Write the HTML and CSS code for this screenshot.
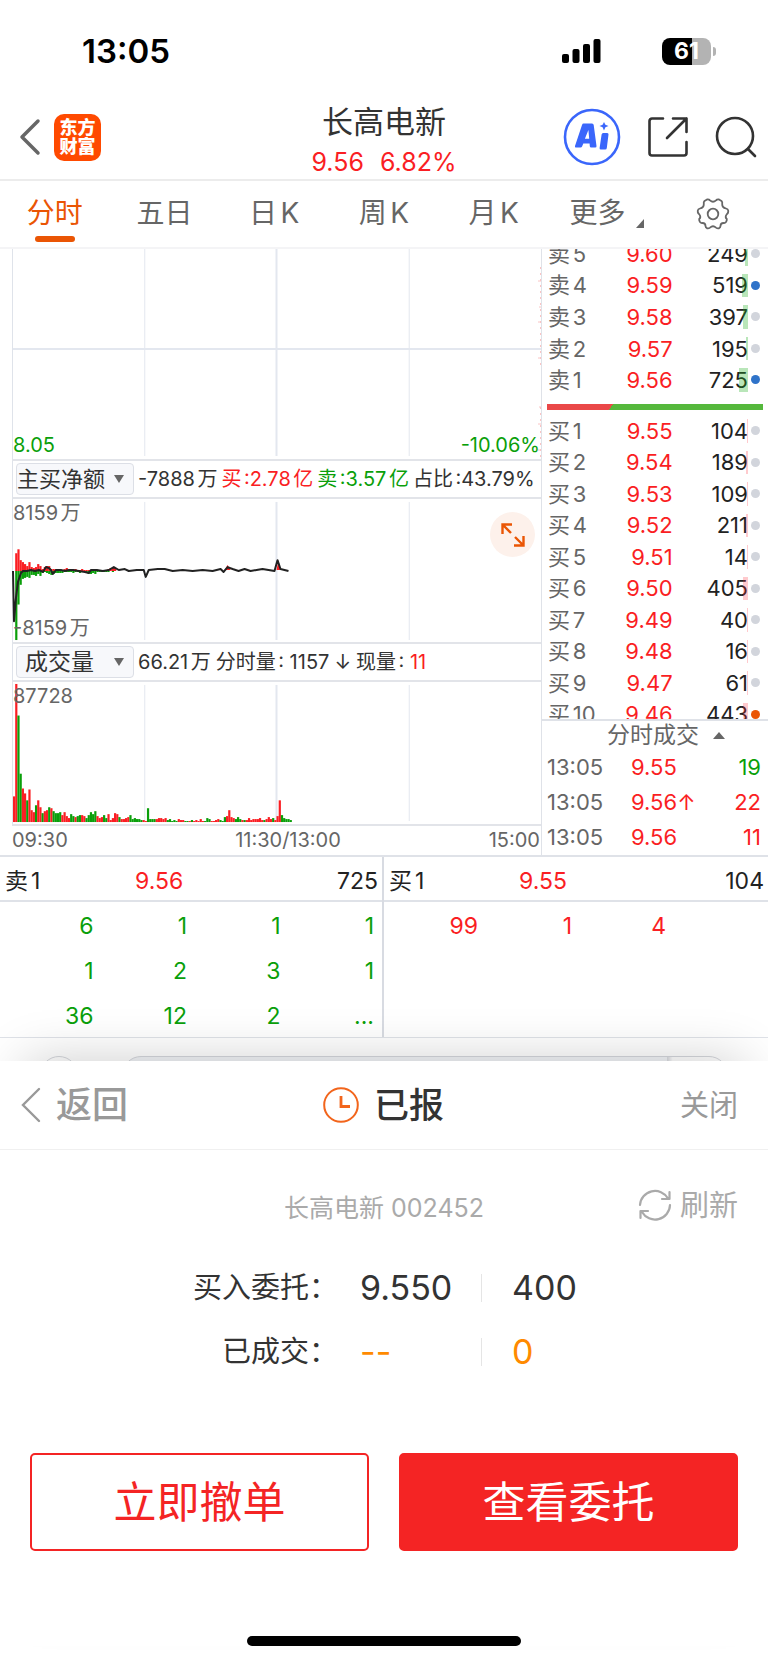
FILE: index.html
```
<!DOCTYPE html>
<html lang="zh-CN">
<head>
<meta charset="utf-8">
<meta name="viewport" content="width=device-width, initial-scale=1">
<title>长高电新</title>
<link rel="stylesheet" href="styles.css">
</head>
<body>
<div class="status">
  <span class="status-time">13:05</span>
  <div class="status-icons">
    <svg width="39" height="26" viewBox="0 0 39 26" aria-hidden="true"><rect x="0" y="16" width="7" height="9" rx="2"/><rect x="10.500" y="11" width="7" height="14" rx="2"/><rect x="21" y="6" width="7" height="19" rx="2"/><rect x="31.500" y="1" width="7" height="24" rx="2"/></svg>
    <div class="battery"><span>61</span></div>
  </div>
</div>

<header class="nav">
  <div class="nav-left">
    <button class="icon-btn" aria-label="返回"><svg width="22" height="38" viewBox="0 0 22 38"><path d="M19 3 3 19l16 16" fill="none" stroke="#666" stroke-width="3.500" stroke-linecap="round" stroke-linejoin="round"/></svg></button>
    <a class="logo" href="#">东方<br>财富</a>
  </div>
  <div class="nav-title">
    <h1>长高电新</h1>
    <p><span>9.56</span><span>6.82%</span></p>
  </div>
  <div class="nav-right">
    <button class="icon-btn" aria-label="AI"><svg width="58" height="58" viewBox="0 0 58 58"><circle cx="29" cy="29" r="27" fill="none" stroke="#3a66fb" stroke-width="2.600"/><path fill="#3a66fb" fill-rule="evenodd" d="M20.500 15.500H29q1.500 0 1.700 1.500l2.800 21q.2 1.500-1.300 1.500h-4q-1.300 0-1.400-1.300l-.2-2.700h-6.300l-1.100 2.700q-.5 1.300-1.800 1.300h-4.300q-1.800 0-1.100-1.600l7-21q.5-1.400 1.500-1.400zM25.400 22l-3.500 8.800h4.300zM40.200 25h4q1.500 0 1.300 1.500L43.800 40q-.2 1.500-1.600 1.500h-4.300q-1.500 0-1.300-1.500l2-13.500q.2-1.500 1.600-1.500zM41 14l1.400 2.800L45.500 18l-3.100 1.300L41 22.500l-1.400-3.200L36.500 18l3.100-1.200z"/></svg></button>
    <button class="icon-btn" aria-label="分享"><svg width="42" height="42" viewBox="0 0 42 42" fill="none" stroke="#333" stroke-width="2.600" stroke-linecap="round" stroke-linejoin="round"><path d="M16 2.500H5A2.500 2.500 0 0 0 2.500 5v32A2.500 2.500 0 0 0 5 39.500h32a2.500 2.500 0 0 0 2.500-2.500V26M26 2.500h13.500V16M39.500 2.500 20 22"/></svg></button>
    <button class="icon-btn" aria-label="搜索"><svg width="42" height="42" viewBox="0 0 42 42" fill="none" stroke="#333" stroke-width="2.600" stroke-linecap="round"><circle cx="20" cy="20" r="18"/><path d="m33 33 7 7"/></svg></button>
  </div>
</header>

<nav class="tabs">
  <a class="tab active" href="#">分时</a>
  <a class="tab" href="#">五日</a>
  <a class="tab" href="#">日K</a>
  <a class="tab" href="#">周K</a>
  <a class="tab" href="#">月K</a>
  <a class="tab more" href="#">更多<i></i></a>
  <button class="tab icon-btn" aria-label="设置"><svg width="34" height="34" viewBox="-17 -17 34 34" fill="none" stroke="#666" stroke-width="1.800" stroke-linejoin="round"><path d="M-6-14.500Q-4-14.800-3-13.600Q0-11 3-13.600Q4-14.800 6-14.500L8.500-13Q9.600-12 9.200-10Q9-6.500 13-5.500Q15-5 15.200-3.500V-2Q15-.8 14-0Q11.500 3 13.800 5Q14 6.500 13 8Q12 9.300 10.500 9Q7.500 9 7.500 12Q7.500 13.500 6 14.300Q4.500 14.800 3 13.600Q0 11-3 13.600Q-4.500 14.800-6 14.300Q-7.500 13.500-7.500 12Q-7.500 9-10.500 9Q-12 9.300-13 8Q-14 6.500-13.800 5Q-11.500 3-14 0Q-15-.8-15.200-2V-3.500Q-15-5-13-5.500Q-9-6.500-9.200-10Q-9.600-12-8.500-13Z"/><circle r="5.300"/></svg></button>
</nav>

<main class="quote">
  <section class="charts">
    <div class="plot plot-price">
      <svg class="grid" viewBox="0 0 529 212" preserveAspectRatio="none"><path class="thin" d="M132 0V209M397 0V209"/><path class="thick" d="M264 0V209M0 101H529"/></svg>
      <svg class="ticks" width="3" height="200" viewBox="0 0 3 200"><path d="M2.500 10V110M2.500 150V200" stroke-dasharray="2 4"/><path d="M0 24h3M1 50h2M0 65h3M0 101h3M1 150h2M0 167h3M0 193h3"/></svg>
      <span class="low">8.05</span><span class="low">-10.06%</span>
    </div>
    <div class="info">
      <button class="picker picker-tight">主买净额<i></i></button>
      <p><span>-7888万</span><span class="red">买:2.78亿</span><span class="green">卖:3.57亿</span><span>占比:43.79%</span></p>
    </div>
    <div class="plot plot-net">
      <svg class="grid" viewBox="0 0 529 145" preserveAspectRatio="none"><path class="thin" d="M132 3V143M397 3V143"/><path class="thick" d="M264 3V143"/><g id="net"></g></svg>
      <span class="scale">8159万</span><span class="scale">-8159万</span>
      <button class="expand" aria-label="全屏"><svg width="24" height="24" viewBox="0 0 24 24" fill="none" stroke="#ea5504" stroke-width="2.400"><path d="M1.500 11V1.500H11M2 2l8 8M22.500 13v9.500H13M22 22l-8-8"/></svg></button>
    </div>
    <div class="info info-volume">
      <button class="picker">成交量<i></i></button>
      <p><span>66.21万</span><span>分时量: 1157</span><span>↓</span><span>现量: <b class="red">11</b></span></p>
    </div>
    <div class="plot plot-volume">
      <svg class="grid" viewBox="0 0 529 144" preserveAspectRatio="none"><path class="thin" d="M132 3V141M397 3V141"/><path class="thick" d="M264 3V141"/><g id="volume"></g></svg>
      <span class="scale">87728</span>
    </div>
    <div class="times"><span>09:30</span><span>11:30/13:00</span><span>15:00</span></div>
  </section>

  <aside class="book">
    <div class="levels">
      <ul class="side asks">
        <li><span>卖5</span><b>9.60</b><em>249</em><i class="bar w3"></i><i class="dot"></i></li>
        <li><span>卖4</span><b>9.59</b><em>519</em><i class="bar w6"></i><i class="dot blue"></i></li>
        <li><span>卖3</span><b>9.58</b><em>397</em><i class="bar w5"></i><i class="dot"></i></li>
        <li><span>卖2</span><b>9.57</b><em>195</em><i class="bar w2"></i><i class="dot"></i></li>
        <li><span>卖1</span><b>9.56</b><em>725</em><i class="bar w9"></i><i class="dot blue"></i></li>
      </ul>
      <div class="ratio"></div>
      <ul class="side bids">
        <li><span>买1</span><b>9.55</b><em>104</em><i class="bar w1"></i><i class="dot"></i></li>
        <li><span>买2</span><b>9.54</b><em>189</em><i class="bar w2"></i><i class="dot"></i></li>
        <li><span>买3</span><b>9.53</b><em>109</em><i class="bar w1"></i><i class="dot"></i></li>
        <li><span>买4</span><b>9.52</b><em>211</em><i class="bar w2"></i><i class="dot"></i></li>
        <li><span>买5</span><b>9.51</b><em>14</em><i class="bar"></i><i class="dot"></i></li>
        <li><span>买6</span><b>9.50</b><em>405</em><i class="bar w5"></i><i class="dot"></i></li>
        <li><span>买7</span><b>9.49</b><em>40</em><i class="bar w1"></i><i class="dot"></i></li>
        <li><span>买8</span><b>9.48</b><em>16</em><i class="bar"></i><i class="dot"></i></li>
        <li><span>买9</span><b>9.47</b><em>61</em><i class="bar w1"></i><i class="dot"></i></li>
        <li><span>买10</span><b>9.46</b><em>443</em><i class="bar w5"></i><i class="dot orange"></i></li>
      </ul>
    </div>
    <div class="deals">
      <button class="deals-head">分时成交<i></i></button>
      <ul>
        <li><span>13:05</span><b>9.55</b><em class="green">19</em></li>
        <li><span>13:05</span><b>9.56↑</b><em class="red">22</em></li>
        <li><span>13:05</span><b>9.56</b><em class="red">11</em></li>
      </ul>
    </div>
  </aside>
</main>

<section class="queues">
  <div class="queue">
    <div class="queue-head"><span>卖1</span><b>9.56</b><em>725</em></div>
    <div class="orders green"><span>6</span><span>1</span><span>1</span><span>1</span><span>1</span><span>2</span><span>3</span><span>1</span><span>36</span><span>12</span><span>2</span><span>...</span></div>
  </div>
  <div class="queue">
    <div class="queue-head"><span>买1</span><b>9.55</b><em>104</em></div>
    <div class="orders red"><span>99</span><span>1</span><span>4</span></div>
  </div>
</section>
<div class="under"><i class="under-round"></i><i class="under-pill"></i></div>

<section class="sheet">
  <header class="sheet-head">
    <button class="back"><svg width="22" height="38" viewBox="0 0 22 38"><path d="M19 3 3 19l16 16" fill="none" stroke="#999" stroke-width="2.400" stroke-linecap="round"/></svg>返回</button>
    <h2><svg width="36" height="36" viewBox="0 0 36 36" fill="none" stroke="#f2651c"><circle cx="18" cy="18" r="16.800" stroke-width="2"/><path d="M18 9v10.500h9" stroke-width="2.800"/></svg>已报</h2>
    <button class="close">关闭</button>
  </header>
  <div class="stock">
    <p>长高电新 002452</p>
    <button class="refresh"><svg width="34" height="34" viewBox="0 0 34 34" fill="none" stroke="#aaa" stroke-width="2.200" stroke-linecap="round" stroke-linejoin="round"><path d="M2 17A15 15 0 0 1 30 10.500M32 17A15 15 0 0 1 4 24M31.500 4v7H24M2.500 30v-7H10"/></svg>刷新</button>
  </div>
  <dl class="order">
    <dt>买入委托：</dt><dd>9.550</dd><dd>400</dd>
    <dt>已成交：</dt><dd class="orange-text">--</dd><dd class="orange-text">0</dd>
  </dl>
  <div class="actions">
    <button class="btn">立即撤单</button>
    <button class="btn btn-fill">查看委托</button>
  </div>
  <div class="home"></div>
</section>
<script src="charts.js"></script>
</body>
</html>
```
FILE: styles.css
```
* { box-sizing: border-box; }
body {
  margin: 0;
  background: #fff;
  color: #333;
  font-family: Inter, "Noto Sans CJK SC", sans-serif;
  font-size: 23px;
  line-height: 1;
  text-autospace: normal;
}
h1, h2, p, ul, dl, dd { margin: 0; padding: 0; font-weight: 400; }
ul { list-style: none; }
b, em, i { font-weight: 400; font-style: normal; }
a { color: inherit; text-decoration: none; }
button { border: 0; padding: 0; background: none; color: inherit; font: inherit; }
svg { display: block; }
.icon-btn { display: flex; align-items: center; justify-content: center; }
.red { color: #fa1e23; }
.green { color: #0a9f0a; }

/* status bar */
.status { display: flex; justify-content: space-between; align-items: center; height: 102px; padding: 0 57px 0 82px; }
.status-time { font-size: 33px; font-weight: 600; color: #000; }
.status-icons { display: flex; align-items: center; gap: 61px; }
.battery {
  position: relative;
  width: 49px; height: 27px;
  border-radius: 8px;
  background: linear-gradient(90deg, #000 62%, #b3b3b3 62%);
  color: #fff; font-size: 23px; font-weight: 700; line-height: 27px; text-align: center;
}
.battery::after { content: ""; position: absolute; left: 51px; top: 9px; width: 3px; height: 9px; border-radius: 0 4px 4px 0; background: #b3b3b3; }

/* title bar */
.nav { display: grid; grid-template-columns: 1fr auto 1fr; align-items: center; height: 79px; padding: 0 11px 12px; border-bottom: 2px solid #ececec; }
.nav-left { display: flex; align-items: center; gap: 13px; padding: 0 0 10px 8px; }
.logo { width: 47px; height: 47px; padding-top: 4px; border-radius: 10px; background: #ff4a00; color: #fff; font-size: 18px; font-weight: 900; line-height: 19px; text-align: center; }
.nav-title { text-align: center; }
.nav-title h1 { font-size: 31px; line-height: 40px; }
.nav-title p { display: flex; justify-content: center; gap: 16px; font-size: 25px; line-height: 40px; color: #fa1e23; }
.nav-right { display: flex; align-items: center; justify-content: flex-end; gap: 26px; padding-bottom: 10px; }

/* period tabs */
.tabs { display: grid; grid-template-columns: repeat(7, 1fr); height: 68px; border-bottom: 2px solid #f4f4f6; color: #666; font-size: 28px; line-height: 64px; text-align: center; }
.tab { position: relative; }
.tab.active { color: #ea5504; }
.tab.active::after { content: ""; position: absolute; left: 50%; bottom: 5px; width: 40px; height: 6px; margin-left: -20px; border-radius: 3px; background: #ea5504; }
.more { padding-right: 12px; }
.more i { position: absolute; right: 14px; bottom: 19px; border-left: 8px solid transparent; border-bottom: 9px solid #666; }

/* charts */
.quote { display: grid; grid-template-columns: 541fr 227fr; border-bottom: 2px solid #dfe2e8; }
.charts { padding-left: 12px; min-width: 0; }
.plot { position: relative; border-left: 1px solid #dfe3ea; border-bottom: 2px solid #e2e4e9; }
.grid { width: 100%; height: 100%; overflow: visible; }
.thin { stroke: #e3e7ef; fill: none; }
.thick { stroke: #e3e7ef; stroke-width: 2; fill: none; }
.ticks { position: absolute; right: 0; top: 8px; fill: none; stroke: #fac4c4; }
.plot-price { height: 212px; }
.low { position: absolute; left: 0; bottom: 4px; font-size: 20px; line-height: 20px; color: #0a9f0a; }
.low + .low { left: auto; right: 1px; }
.info { display: flex; align-items: center; gap: 4px; height: 38px; padding-left: 3px; border-bottom: 2px solid #e2e4e9; border-left: 1px solid #dfe3ea; }
.info p { display: flex; gap: 4px; font-size: 20px; white-space: nowrap; }
.picker { display: flex; flex: none; align-items: center; justify-content: space-between; width: 118px; height: 32px; padding: 0 9px 0 8px; border: 1px solid #dcdfe6; border-radius: 4px; background: #f7f8fb; font-size: 23px; line-height: 28px; }
.picker-tight { padding-left: 0; font-size: 22px; }
.picker i { border: 5px solid transparent; border-top: 8px solid #666; border-bottom: 0; }
.plot-net { height: 145px; }
.scale { position: absolute; left: 0; top: 4px; color: #666; font-size: 20px; line-height: 20px; }
.scale + .scale { top: auto; bottom: 4px; }
.expand { position: absolute; right: 6px; top: 13px; display: flex; align-items: center; justify-content: center; width: 45px; height: 45px; border-radius: 50%; background: #fdf1eb; }
.info-volume p { gap: 5px; }
.plot-volume { height: 144px; }
.times { display: flex; justify-content: space-between; padding-right: 1px; color: #666; font-size: 20px; line-height: 29px; }
.times span:first-child { width: 114px; }
.times span:last-child { width: 90px; text-align: right; }

/* order book */
.book { display: flex; flex-direction: column; border-left: 1px solid #dfe2e8; }
.levels { height: 472px; overflow: hidden; border-bottom: 2px solid #dfe2e8; }
.side { display: grid; grid-auto-rows: 1fr; }
.side li { position: relative; display: grid; grid-template-columns: 56px 71fr 78fr; align-items: center; padding: 0 20px 0 6px; font-size: 22px; }
.side span, .deals span { color: #666; white-space: nowrap; }
.side b { color: #fa1e23; text-align: right; }
.side em { text-align: right; color: #222; }
.asks { height: 158px; margin-top: -11px; }
.bids { height: 315px; }
.bar { position: absolute; right: 20px; top: 4px; bottom: 4px; width: 1px; background: #ff2d3740; }
.asks .bar { background: #20b02050; }
.w2 { width: 2px; }
.w3 { width: 3px; }
.w5 { width: 5px; }
.w6 { width: 6px; }
.w9 { width: 9px; }
.dot { position: absolute; right: 8px; top: 11px; width: 9px; height: 9px; border-radius: 50%; background: #d2d5dc; }
.blue { background: #2f73c9; }
.orange { background: #ea5504; }
.ratio { height: 6px; margin: 8px 5px 5px; background: linear-gradient(125deg, #ea4848 30%, #55b83c 30%); }
.deals-head { display: flex; align-items: center; justify-content: center; gap: 14px; width: 100%; height: 29px; padding-left: 22px; color: #666; font-size: 23px; }
.deals-head i { border: 6px solid transparent; border-bottom: 7px solid #666; border-top: 0; }
.deals li { display: grid; grid-template-columns: 84px 1fr auto; padding: 0 7px 0 5px; font-size: 22px; line-height: 35px; }
.deals b { color: #fa1e23; }

/* queue detail */
.queues { display: grid; grid-template-columns: 382fr 386fr; border-bottom: 1px solid #dfe2e8; }
.queue + .queue { border-left: 2px solid #d8dbe2; }
.queue-head { display: grid; grid-template-columns: 130px 1fr auto; align-items: center; height: 45px; padding: 5px 4px 0 5px; border-bottom: 2px solid #dfe2e8; color: #222; }
.queue-head b { color: #fa1e23; }
.orders { display: grid; grid-template-columns: repeat(4, 1fr); align-content: start; height: 135px; padding: 2px 8px 0 0; line-height: 45px; text-align: right; }
.under { display: flex; gap: 44px; height: 23px; padding: 18px 40px 0; overflow: hidden; background: #fff; }
.under-round { width: 38px; height: 38px; flex: none; border: 1px solid #d6d8dd; border-radius: 50%; }
.under-pill { flex: 1; height: 38px; border: 1px solid #d6d8dd; border-radius: 20px; background: linear-gradient(90deg, #f2f4f8 90%, #d6d8dd 90%, #fff 91%); }

/* order sheet */
.sheet { position: relative; background: #fff; box-shadow: 0 -24px 50px -24px rgba(0, 0, 0, .2); }
.sheet-head { display: grid; grid-template-columns: 1fr auto 1fr; align-items: center; height: 89px; padding: 0 30px 0 20px; border-bottom: 1px solid #f0f0f0; color: #999; font-size: 29px; }
.back { display: flex; align-items: center; gap: 14px; justify-self: start; font-size: 36px; font-weight: 500; }
.sheet-head h2 { display: flex; align-items: center; gap: 15px; padding-left: 9px; color: #333; font-size: 35px; font-weight: 500; }
.close { justify-self: end; }
.stock { display: grid; grid-template-columns: 1fr auto 1fr; align-items: center; height: 116px; padding: 0 30px; color: #aaa; font-size: 29px; }
.stock p { grid-column: 2; font-size: 25px; line-height: 36px; }
.refresh { display: flex; align-items: center; justify-self: end; gap: 8px; padding-bottom: 6px; }
.order { display: grid; grid-template-columns: 338fr 143fr 287fr; row-gap: 20px; font-size: 29px; line-height: 44px; }
.order dt { text-align: right; }
.order dd { padding-left: 22px; font-size: 34px; }
.order dd + dd { padding-left: 31px; background: linear-gradient(#e5e5e5, #e5e5e5) 0 50% / 1px 28px no-repeat; }
.order .orange-text { color: #ff8a00; }
.actions { display: grid; grid-template-columns: 1fr 1fr; gap: 30px; padding: 79px 30px 85px; }
.btn { height: 98px; border: 2px solid #f42424; border-radius: 5px; background: #fff; color: #f42424; font-size: 43px; }
.btn-fill { background: #f42424; color: #fff; }
.home { width: 274px; height: 10px; margin: 0 auto 17px; border-radius: 5px; background: #000; }
```
FILE: charts.js
```
const RED = '#fa1e23', GREEN = '#0a9f0a', STEP = 2.2;

// One entry per minute: "r" or "g" for the colour, then the bar height.
const volume = ('r26 r140 g108 g49 r34 r29 g22 r33 r12 r10 g17 r22 r15 g9 r11 r12 g15 r14 g11 g9 g9 g10 r7 r10 r6 r4 g8 g6 r5 g6 ' +
  'g7 r7 r6 g4 g7 g10 g8 g11 r6 r4 r5 g7 g4 r8 r2 r4 r9 r8 g5 r3 r3 r4 r5 g7 g3 g4 g3 g3 g2 r2 ' +
  'r1 g14 g3 g3 g3 r3 r4 r4 r3 r4 g2 g3 g1 g2 g1 r3 r2 r2 g1 g1 r1 g2 r1 r2 r1 r3 r1 g1 g4 g3 ' +
  'r1 r1 r2 r3 g2 g1 g5 r6 r12 r5 r4 g3 g5 g3 r2 g2 r2 r4 r2 r3 r3 r3 r4 r2 g2 r3 r5 r3 g4 r2 ' +
  'r6 r22 g7 g4 g3 g3 g2').split(' ');

// One entry per minute: [inflow height, outflow height].
const flow = [[0, 0], [18, 70], [22, 34], [11, 14], [9, 8], [7, 7], [5, 6], [9, 7], [4, 4], [3, 4], [4, 5], [7, 3], [5, 5], [2, 2],
  [4, 1], [5, 2], [5, 3], [2, 4], [2, 3], [2, 2], [1, 2], [2, 2], [1, 2], [2, 1], [3, 1], [1, 1], [2, 1], [2, 2], [2, 1], [1, 1],
  [1, 2], [2, 1], [1, 1], [1, 2], [1, 3], [1, 3], [1, 2], [1, 3], [1, 1], [1, 1], [1, 1], [1, 1], [1, 1], [2, 1], [3, 0], [3, 1], [3, 0]];

const trend = '0,73 1,124 3,100 5,84 8,75 10,73 14,73 18,72 22,73 26,72 30,74 33,69 36,70 38,72 40,76 43,72 48,72 52,73 56,72 60,72 66,73 72,74 ' +
  '76,75 78,72 84,72 90,73 96,72 101,69 106,72 112,71 116,73 124,72 131,72 133,79 136,72 145,71 152,71 160,73 170,72 180,73 190,72 200,73 208,71 ' +
  '211,74 215,69 220,71 226,73 232,71 238,73 244,72 250,71 256,72 262,73 265,62 268,71 272,72 276,73';

function bar(x, top, height, color) {
  return `<rect x="${x.toFixed(1)}" y="${top}" width="2.200" height="${height}" fill="${color}"/>`;
}

document.getElementById('volume').innerHTML = volume
  .map((v, i) => bar(i * STEP, 142 - v.slice(1), +v.slice(1), v[0] === 'r' ? RED : GREEN)).join('');

document.getElementById('net').innerHTML = flow
  .map(([up, down], i) => bar(i * STEP, 73 - up, up, RED) + bar(i * STEP, 73, down, GREEN)).join('') +
  `<path d="M212 72l3-5 3 5M264 72l2-10 2 10" fill="${RED}"/>` +
  `<polyline points="${trend}" fill="none" stroke="#222" stroke-width="2" stroke-linejoin="round"/>`;
```
